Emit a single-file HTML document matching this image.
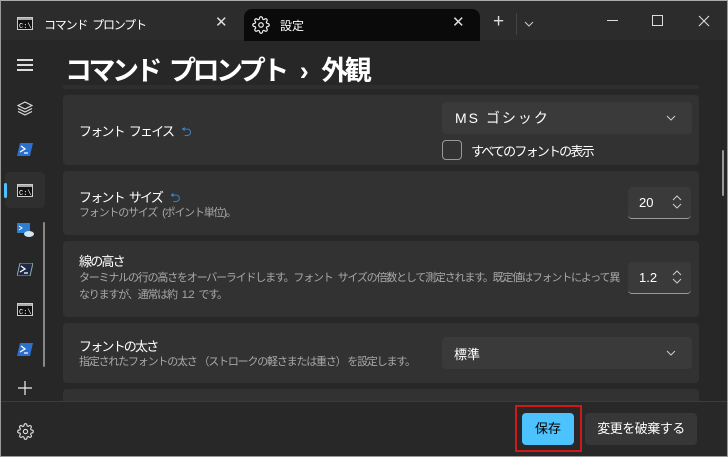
<!DOCTYPE html>
<html><head><meta charset="utf-8"><style>
*{box-sizing:border-box;margin:0;padding:0}
body{width:728px;height:457px;overflow:hidden;background:#272727;font-family:"Liberation Sans","Noto Sans CJK JP",sans-serif;color:#fff;position:relative}
.frame{position:absolute;inset:0;border:1px solid #9a9a9a;border-top-color:#aaa;pointer-events:none;z-index:20}
.tb{position:absolute;left:0;top:0;width:728px;height:40px;background:#2c2c2c}
.tab2{position:absolute;left:244px;top:9px;width:236px;height:32px;background:#0a0a0a;border-radius:8px 8px 0 0}
.a{position:absolute;white-space:nowrap}
.card{position:absolute;left:63px;width:636px;background:#323232;border-radius:4px}
.t{font-size:13px;color:#fff;letter-spacing:-1.8px}
.s{font-size:11px;color:#a8a8a8;line-height:17px;letter-spacing:-1.2px}
.sp1{display:inline-block;width:5px}
.dd{position:absolute;left:442px;width:250px;height:32px;background:#3a3a3a;border-radius:4px}
.sp{position:absolute;left:628px;width:63px;height:32px;background:#3a3a3a;border-radius:4px;border-bottom:1px solid #9a9a9a}
.footer{position:absolute;left:0;top:401px;width:728px;height:56px;background:#282828;border-top:1px solid #3c3c3c}
.r{color:#3b8ad8;letter-spacing:0;margin-left:8px}
</style></head><body>
<div class="tb"></div>
<div class="tab2"></div>
<svg class="a" style="left:17px;top:17px" width="16" height="13"><rect x="0.5" y="0.5" width="15" height="12" fill="#111" stroke="#ccc"/><rect x="1" y="1" width="14" height="2" fill="#aaa"/><text x="2" y="11" font-size="7" fill="#fff" font-family="Liberation Mono">C:\_</text></svg>
<div class="a" style="left:44px;top:16px;font-size:12px;letter-spacing:-1.2px">コマンド<span class="sp1"></span>プロンプト</div>
<div class="a" style="left:215px;top:13px;font-size:15px;color:#ddd">✕</div>
<svg class="a" style="left:252px;top:16px" width="18" height="18" viewBox="0 0 24 24" fill="none" stroke="#eee" stroke-width="1.6"><circle cx="12" cy="12" r="3"/><path d="M19.4 15a1.65 1.65 0 0 0 .33 1.82l.06.06a2 2 0 1 1-2.83 2.83l-.06-.06a1.65 1.65 0 0 0-1.82-.33 1.65 1.65 0 0 0-1 1.51V21a2 2 0 1 1-4 0v-.09A1.65 1.65 0 0 0 9 19.4a1.65 1.65 0 0 0-1.82.33l-.06.06a2 2 0 1 1-2.83-2.83l.06-.06A1.65 1.65 0 0 0 4.68 15a1.65 1.65 0 0 0-1.51-1H3a2 2 0 1 1 0-4h.09A1.65 1.65 0 0 0 4.6 9a1.65 1.65 0 0 0-.33-1.82l-.06-.06a2 2 0 1 1 2.83-2.83l.06.06A1.65 1.65 0 0 0 9 4.68a1.65 1.65 0 0 0 1-1.51V3a2 2 0 1 1 4 0v.09a1.65 1.65 0 0 0 1 1.51 1.65 1.65 0 0 0 1.82-.33l.06-.06a2 2 0 1 1 2.83 2.83l-.06.06A1.65 1.65 0 0 0 19.4 9a1.65 1.65 0 0 0 1.51 1H21a2 2 0 1 1 0 4h-.09a1.65 1.65 0 0 0-1.51 1z"/></svg>
<div class="a" style="left:280px;top:17px;font-size:12px">設定</div>
<div class="a" style="left:452px;top:13px;font-size:15px;color:#ddd">✕</div>
<div class="a" style="left:493px;top:11px;font-size:19px;color:#ddd;font-weight:300">+</div>
<div class="a" style="left:516px;top:13px;width:1px;height:22px;background:#444"></div>
<svg class="a" style="left:524px;top:21px" width="10" height="6"><path d="M1 1l4 4 4-4" stroke="#ccc" fill="none"/></svg>
<div class="a" style="left:607px;top:20px;width:11px;height:1px;background:#ddd"></div>
<div class="a" style="left:652px;top:15px;width:11px;height:11px;border:1px solid #ddd"></div>
<svg class="a" style="left:698px;top:15px" width="12" height="12"><path d="M1 1l10 10M11 1L1 11" stroke="#ddd" stroke-width="1.1"/></svg>

<div class="a" style="left:17px;top:59px;width:16px;height:1.5px;background:#ddd;box-shadow:0 5px 0 #ddd,0 10px 0 #ddd"></div>
<svg class="a" style="left:17px;top:101px" width="16" height="16" viewBox="0 0 16 16" fill="none" stroke="#ddd" stroke-width="1.2"><path d="M8 1l7 3.5-7 3.5-7-3.5z"/><path d="M1 7.5l7 3.5 7-3.5M1 10.5l7 3.5 7-3.5"/></svg>
<svg class="a" style="left:17px;top:143px" width="16" height="13"><path d="M3 0h13l-3 13H0z" fill="#2d6fcf"/><path d="M4 3l4 3-5 3M7 10h4" stroke="#fff" stroke-width="1.3" fill="none"/></svg>
<div class="a" style="left:5px;top:172px;width:40px;height:36px;background:#2f2f2f;border-radius:5px"></div>
<div class="a" style="left:4px;top:183px;width:3px;height:15px;background:#4cc2ff;border-radius:2px"></div>
<svg class="a" style="left:17px;top:184px" width="16" height="13"><rect x="0.5" y="0.5" width="15" height="12" fill="#111" stroke="#ccc"/><rect x="1" y="1" width="14" height="2" fill="#aaa"/><text x="2" y="11" font-size="7" fill="#fff" font-family="Liberation Mono">C:\_</text></svg>
<svg class="a" style="left:17px;top:223px" width="17" height="14"><rect x="0" y="0" width="13" height="10" fill="#2d7dd2"/><path d="M2 3l3 2-3 2" stroke="#fff" fill="none"/><ellipse cx="12" cy="11" rx="5" ry="3" fill="#cfe6f7"/></svg>
<svg class="a" style="left:17px;top:263px" width="16" height="13"><path d="M3 0h13l-3 13H0z" fill="#1e2a44" stroke="#8aa"/><path d="M4 3l4 3-5 3M7 10h4" stroke="#fff" stroke-width="1.3" fill="none"/></svg>
<svg class="a" style="left:17px;top:303px" width="16" height="13"><rect x="0.5" y="0.5" width="15" height="12" fill="#111" stroke="#ccc"/><rect x="1" y="1" width="14" height="2" fill="#aaa"/><text x="2" y="11" font-size="7" fill="#fff" font-family="Liberation Mono">C:\_</text></svg>
<svg class="a" style="left:17px;top:343px" width="16" height="13"><path d="M3 0h13l-3 13H0z" fill="#2d6fcf"/><path d="M4 3l4 3-5 3M7 10h4" stroke="#fff" stroke-width="1.3" fill="none"/></svg>
<div class="a" style="left:43px;top:222px;width:2px;height:145px;background:#888;border-radius:1px"></div>
<svg class="a" style="left:18px;top:381px" width="14" height="14"><path d="M7 0v14M0 7h14" stroke="#eee" stroke-width="1.2"/></svg>

<div class="a" style="left:65px;top:49px;font-size:27px;font-weight:bold;letter-spacing:-3.5px">コマンド<span style="display:inline-block;width:10px"></span>プロンプト<span style="display:inline-block;width:14px"></span>›<span style="display:inline-block;width:16px"></span>外観</div>
<div class="a" style="left:63px;top:85px;width:636px;height:4px;background:#2e2e2e"></div>

<div class="card" style="top:95px;height:70px"></div>
<div class="a t" style="left:79px;top:121px">フォント<span class="sp1"></span>フェイス<span class="r">⮌</span></div>
<div class="dd" style="top:102px"></div>
<div class="a" style="left:455px;top:108px;font-size:14px;letter-spacing:2px">MS ゴシック</div>
<svg class="a" style="left:666px;top:115px" width="10" height="6"><path d="M1 1l4 4 4-4" stroke="#ccc" fill="none"/></svg>
<div class="a" style="left:442px;top:140px;width:20px;height:20px;border:1px solid #999;border-radius:4px"></div>
<div class="a t" style="left:471px;top:141px">すべてのフォントの表示</div>

<div class="card" style="top:171px;height:64px"></div>
<div class="a t" style="left:79px;top:187px">フォント<span class="sp1"></span>サイズ<span class="r">⮌</span></div>
<div class="a s" style="left:79px;top:205px">フォントのサイズ<span class="sp1"></span>(ポイント単位)。</div>
<div class="sp" style="top:187px"></div>
<div class="a" style="left:639px;top:195px;font-size:13px">20</div>
<svg class="a" style="left:672px;top:195px" width="10" height="14"><path d="M1 5l4-4 4 4M1 9l4 4 4-4" stroke="#ccc" fill="none"/></svg>

<div class="card" style="top:241px;height:76px"></div>
<div class="a t" style="left:79px;top:251px">線の高さ</div>
<div class="a s" style="left:79px;top:270px">ターミナルの行の高さをオーバーライドします。フォント<span class="sp1"></span>サイズの倍数として測定されます。既定値はフォントによって異<br>なりますが、通常は約<span class="sp1"></span>1.2<span class="sp1"></span>です。</div>
<div class="sp" style="top:262px"></div>
<div class="a" style="left:639px;top:270px;font-size:13px">1.2</div>
<svg class="a" style="left:672px;top:270px" width="10" height="14"><path d="M1 5l4-4 4 4M1 9l4 4 4-4" stroke="#ccc" fill="none"/></svg>

<div class="card" style="top:323px;height:60px"></div>
<div class="a t" style="left:79px;top:336px">フォントの太さ</div>
<div class="a s" style="left:79px;top:354px">指定されたフォントの太さ （ストロークの軽さまたは重さ） を設定します。</div>
<div class="dd" style="top:337px"></div>
<div class="a" style="left:454px;top:344px;font-size:13px">標準</div>
<svg class="a" style="left:666px;top:350px" width="10" height="6"><path d="M1 1l4 4 4-4" stroke="#ccc" fill="none"/></svg>

<div class="card" style="top:389px;height:20px"></div>
<div class="a" style="left:722px;top:150px;width:2px;height:46px;background:#999;border-radius:1px"></div>

<div class="footer"></div>
<svg class="a" style="left:17px;top:423px" width="17" height="17" viewBox="0 0 24 24" fill="none" stroke="#ddd" stroke-width="1.6"><circle cx="12" cy="12" r="3"/><path d="M19.4 15a1.65 1.65 0 0 0 .33 1.82l.06.06a2 2 0 1 1-2.83 2.83l-.06-.06a1.65 1.65 0 0 0-1.82-.33 1.65 1.65 0 0 0-1 1.51V21a2 2 0 1 1-4 0v-.09A1.65 1.65 0 0 0 9 19.4a1.65 1.65 0 0 0-1.82.33l-.06.06a2 2 0 1 1-2.83-2.83l.06-.06A1.65 1.65 0 0 0 4.68 15a1.650 1.65 0 0 0-1.51-1H3a2 2 0 1 1 0-4h.09A1.65 1.65 0 0 0 4.6 9a1.65 1.65 0 0 0-.33-1.82l-.06-.06a2 2 0 1 1 2.83-2.83l.06.06A1.65 1.65 0 0 0 9 4.68a1.65 1.65 0 0 0 1-1.51V3a2 2 0 1 1 4 0v.09a1.65 1.65 0 0 0 1 1.51 1.65 1.65 0 0 0 1.82-.33l.06-.06a2 2 0 1 1 2.83 2.83l-.06.06A1.65 1.65 0 0 0 19.4 9a1.65 1.65 0 0 0 1.51 1H21a2 2 0 1 1 0 4h-.09a1.65 1.65 0 0 0-1.51 1z"/></svg>
<div class="a" style="left:515px;top:405px;width:67px;height:47px;border:2px solid #d01818"></div>
<div class="a" style="left:522px;top:413px;width:52px;height:32px;background:#4cc2ff;border-radius:4px;color:#000;font-size:13px;text-align:center;line-height:32px">保存</div>
<div class="a" style="left:585px;top:413px;width:112px;height:32px;background:#373737;border-radius:4px;font-size:13px;text-align:center;line-height:32px;letter-spacing:-0.5px">変更を破棄する</div>
<div class="frame"></div>
</body></html>
